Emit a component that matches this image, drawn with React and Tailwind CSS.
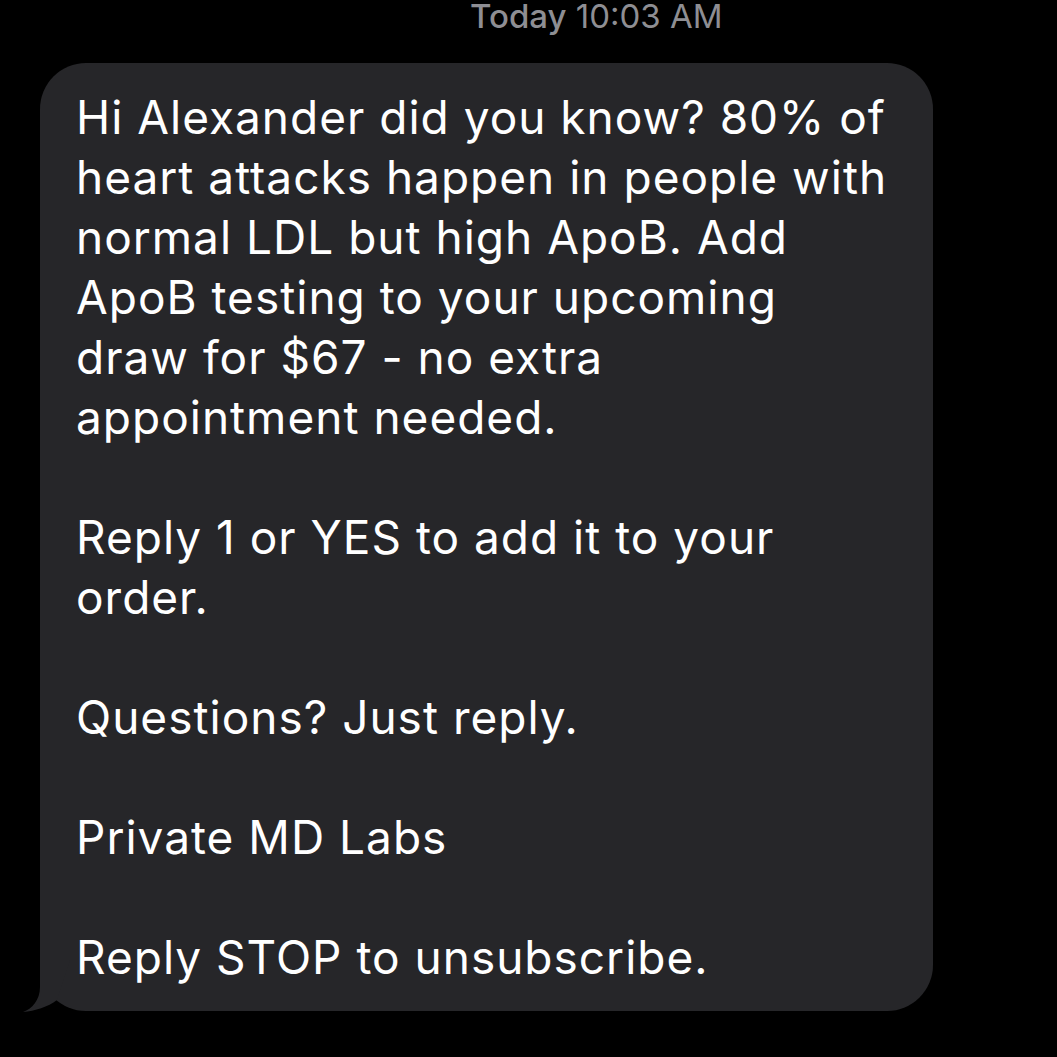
import React from "react";

const lines = [
  "Hi Alexander did you know? 80% of",
  "heart attacks happen in people with",
  "normal LDL but high ApoB. Add",
  "ApoB testing to your upcoming",
  "draw for $67 - no extra",
  "appointment needed.",
  "",
  "Reply 1 or YES to add it to your",
  "order.",
  "",
  "Questions? Just reply.",
  "",
  "Private MD Labs",
  "",
  "Reply STOP to unsubscribe.",
];

const Tail = () => (
  <svg
    className="absolute left-[-20px] bottom-[-2px]"
    width="60"
    height="58"
    viewBox="0 0 60 58"
  >
    <path
      d="M20 5 L20 32 C20 45 12 54 3 57 C15 56 28 52 37 45 L50 5 Z"
      fill="#262629"
    />
  </svg>
);

export default function App() {
  return (
    <div
      className="w-[1057px] h-[1057px] bg-black overflow-hidden"
      style={{ fontFamily: "Inter, 'Noto Sans', sans-serif" }}
    >
      {/* timestamp */}
      <div className="pl-[470px] h-[63px] text-[33px] leading-[33px] text-[#8e8e93]">
        <span className="font-medium">Today</span> 10:03 AM
      </div>

      {/* incoming bubble */}
      <div className="relative ml-[40px] w-[893px] rounded-[46px] bg-[#262629] pl-[36px] pr-[20px] pt-[24px] pb-[24px] text-[46px] leading-[60px] tracking-[1px] text-white">
        {lines.map((line, i) => (
          <div key={i} className="h-[60px] whitespace-nowrap">
            {line}
          </div>
        ))}
        <Tail />
      </div>
    </div>
  );
}
